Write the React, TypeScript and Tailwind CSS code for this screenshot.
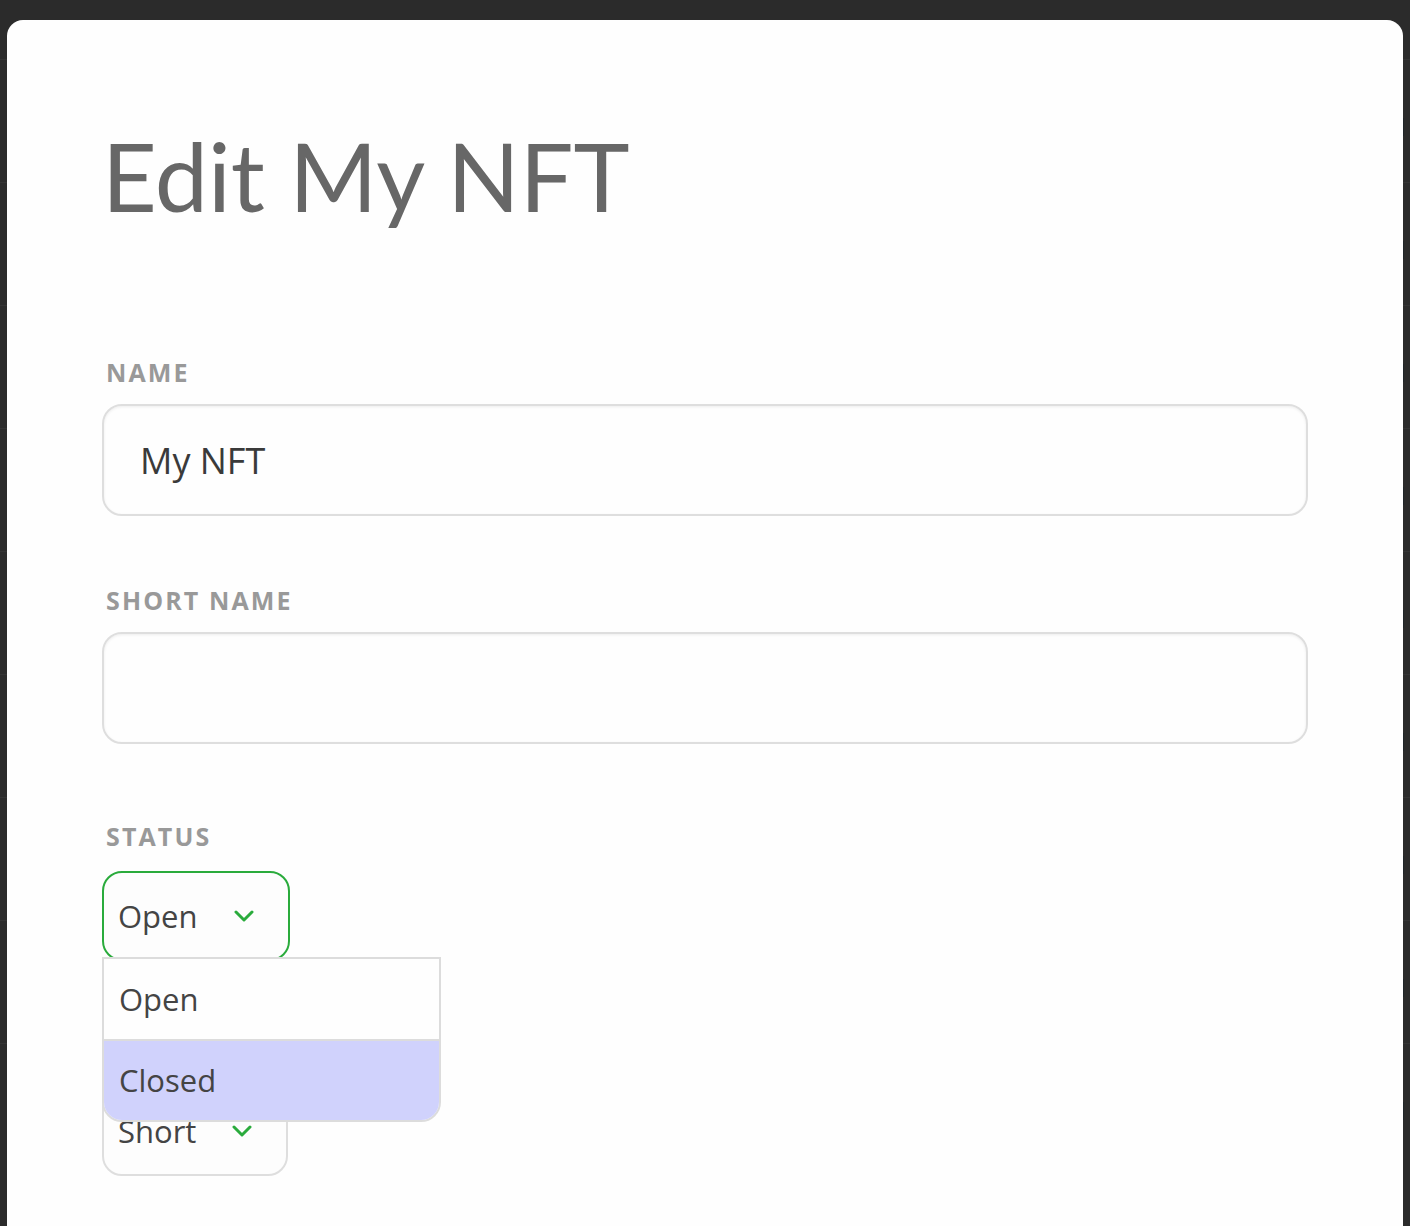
import React from "react";

const Chevron = () => (
  <svg width="20" height="12" viewBox="0 0 20 12" fill="none">
    <path d="M2 2 L10 10 L18 2" stroke="#2aab3c" strokeWidth="3" strokeLinecap="round" strokeLinejoin="round" />
  </svg>
);

const labelCls =
  "text-[25px] leading-none font-bold tracking-[0.085em] text-[#999] [font-family:'Open_Sans',sans-serif]";

export default function App() {
  const rows = Array.from({ length: 9 });
  return (
    <div className="relative h-[1226px] w-[1410px] overflow-hidden bg-[#2b2b2b]">
      {/* page behind the modal */}
      <div className="flex flex-col">
        <div className="h-[59px]" />
        {rows.map((_, i) => (
          <div
            key={i}
            className="flex h-[123px] items-center justify-end border-t border-[#343434] pr-[1px] pt-[10px] text-[26px] text-[#1c1c1c] [font-family:'Open_Sans',sans-serif]"
          >
            1
          </div>
        ))}
      </div>

      {/* modal */}
      <div className="absolute left-[7px] top-[20px] h-[1300px] w-[1396px] rounded-[16px] bg-[#fefefe] px-[95px] pt-[108px]">
        <h1 className="text-[95px] leading-none font-normal text-[#676767] [font-family:Lato,sans-serif]">
          Edit My NFT
        </h1>

        <div className={`mt-[137px] pl-[4px] ${labelCls}`}>NAME</div>
        <div className="mt-[19px] flex h-[112px] items-center rounded-[20px] border-2 border-[#dedede] bg-[#fefefe] pl-[36px] pt-[2px] text-[36px] text-[#3a3a3a] shadow-[inset_0_1px_3px_rgba(0,0,0,0.07)] [font-family:'Open_Sans',sans-serif]">
          My NFT
        </div>

        <div className={`mt-[72px] pl-[4px] ${labelCls}`}>SHORT NAME</div>
        <div className="mt-[19px] h-[112px] rounded-[20px] border-2 border-[#dedede] bg-[#fefefe] shadow-[inset_0_1px_3px_rgba(0,0,0,0.07)]" />

        <div className={`mt-[80px] pl-[4px] ${labelCls}`}>STATUS</div>

        <div className="relative mt-[22px] w-[188px]">
          <div className="flex h-[90px] items-center justify-between rounded-[20px] border-2 border-[#2aab3c] bg-[#fdfdfd] pl-[14px] pr-[34px] text-[31px] leading-none text-[#444] [font-family:'Open_Sans',sans-serif]">
            <span>Open</span>
            <Chevron />
          </div>

          {/* dropdown menu */}
          <div className="absolute left-0 top-[86px] z-10 flex w-[339px] flex-col overflow-hidden rounded-b-[20px] border-2 border-[#dcdcdc] bg-[#fefefe] text-[31px] leading-none text-[#444] [font-family:'Open_Sans',sans-serif]">
            <div className="flex h-[80px] items-center pl-[15px]">Open</div>
            <div className="flex h-[81px] items-center border-t-2 border-[#dcdcdc] bg-[#d0d2fc] pl-[15px]">
              Closed
            </div>
          </div>
        </div>

        <div className="mt-[125px] flex h-[90px] w-[186px] items-center justify-between rounded-[20px] border-2 border-[#dedede] bg-[#fdfdfd] pl-[14px] pr-[34px] text-[31px] leading-none text-[#444] [font-family:'Open_Sans',sans-serif]">
          <span>Short</span>
          <Chevron />
        </div>
      </div>
    </div>
  );
}
